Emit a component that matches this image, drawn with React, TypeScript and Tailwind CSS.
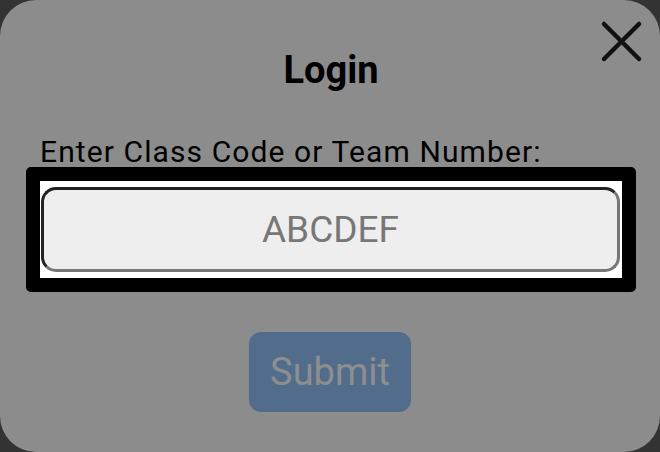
import React from "react";

const CloseIcon = () => (
  <svg width="44" height="44" viewBox="0 0 44 44" fill="none">
    <path d="M5 5 L40 40 M40 5 L5 40" stroke="#111" strokeWidth="4.5" strokeLinecap="round" />
  </svg>
);

export default function App() {
  return (
    <div className="h-[452px] w-[660px] bg-[#333333]" style={{ fontFamily: "Roboto, 'Noto Sans', sans-serif" }}>
      <div className="relative flex h-full w-full flex-col rounded-[36px] bg-[#8c8c8c] pl-[40px] pr-[38px] pt-[48px]">
        <button className="absolute right-[17px] top-[19px]" aria-label="Close">
          <CloseIcon />
        </button>

        <h1 className="text-center text-[38px] font-bold leading-[44px] text-black">Login</h1>

        <label className="mt-[44px] text-[30px] leading-[32px] tracking-[1.1px] text-black">
          Enter Class Code or Team Number:
        </label>

        <div className="-mx-[14px] mt-[-1px] rounded-[5px] border-[14px] border-black">
          <div className="bg-white pb-[6px] pl-[1px] pr-[2px] pt-[6px]">
            <input
              placeholder="ABCDEF"
              className="h-[85px] w-full rounded-[15px] border-[3px] border-b-[#777777] border-l-[#222222] border-r-[#777777] border-t-[#222222] bg-[#eeeeee] text-center text-[37px] text-black outline-none placeholder:text-[#777777]"
            />
          </div>
        </div>

        <div className="mt-[40px] flex justify-center pr-[2px]">
          <button className="h-[80px] rounded-[12px] bg-[#526d8c] px-[21px] text-[38px] leading-[78px] text-[#8e8e8e]">
            Submit
          </button>
        </div>
      </div>
    </div>
  );
}
